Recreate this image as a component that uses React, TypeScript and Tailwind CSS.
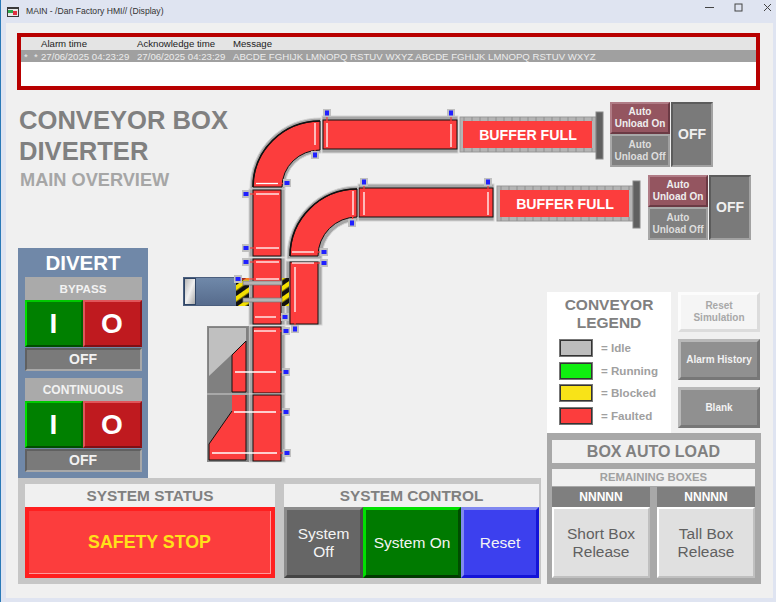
import React from 'react';

// sensors on the conveyors: s = blue tag position, l = white line, from the tag a short red lead
type Sensor = { sx: number; sy: number; x1: number; y1: number; x2: number; y2: number };

const sensors: Sensor[] = [
  { sx: 327, sy: 113, x1: 327, y1: 123, x2: 327, y2: 147 },
  { sx: 451, sy: 113, x1: 451, y1: 124, x2: 451, y2: 147 },
  { sx: 315, sy: 155, x1: 315, y1: 123, x2: 315, y2: 145 },
  { sx: 287, sy: 183, x1: 256, y1: 183.5, x2: 278, y2: 183.5 },
  { sx: 246, sy: 194, x1: 256, y1: 194, x2: 279, y2: 194 },
  { sx: 246, sy: 248, x1: 256, y1: 248, x2: 279, y2: 248 },
  { sx: 246, sy: 262, x1: 256, y1: 262, x2: 279, y2: 262 },
  { sx: 238, sy: 279, x1: 256, y1: 279, x2: 279, y2: 279 },
  { sx: 364, sy: 182, x1: 364, y1: 192, x2: 364, y2: 215 },
  { sx: 352, sy: 223, x1: 353, y1: 191, x2: 353, y2: 215 },
  { sx: 324, sy: 252, x1: 292, y1: 252, x2: 314, y2: 252 },
  { sx: 324, sy: 263, x1: 292, y1: 263, x2: 314, y2: 263 },
  { sx: 295, sy: 329, x1: 295, y1: 267, x2: 295, y2: 312 },
  { sx: 285, sy: 317, x1: 255, y1: 317, x2: 276, y2: 317 },
  { sx: 286, sy: 331, x1: 254, y1: 331, x2: 276, y2: 331 },
  { sx: 286, sy: 372, x1: 235, y1: 372, x2: 276, y2: 372 },
  { sx: 286, sy: 412, x1: 234, y1: 412, x2: 276, y2: 412 },
  { sx: 287, sy: 453, x1: 212, y1: 453, x2: 277, y2: 453 },
  { sx: 488, sy: 182, x1: 488, y1: 192, x2: 488, y2: 215 },
];

const RED = '#fc3d3d';
const RAIL = '#a6a6a6';
const RAIL_EDGE = '#d4d4d4';

const Straight = ({ x, y, w, h, vertical }: { x: number; y: number; w: number; h: number; vertical?: boolean }) => (
  <g>
    {vertical ? (
      <rect x={x - 4} y={y - 1} width={w + 8} height={h + 2} fill={RAIL} stroke={RAIL_EDGE} />
    ) : (
      <rect x={x - 1} y={y - 4} width={w + 2} height={h + 8} fill={RAIL} stroke={RAIL_EDGE} />
    )}
    <rect x={x} y={y} width={w} height={h} fill={RED} stroke="#111" />
  </g>
);

const Buffer = ({ x, y }: { x: number; y: number }) => (
  <g>
    <rect x={x} y={y} width={136} height={35} fill="#b4b4b4" stroke="#999" />
    {Array.from({ length: 17 }).map((_, i) => (
      <g key={i}>
        <line x1={x + 4 + i * 8} y1={y} x2={x + 4 + i * 8} y2={y + 4} stroke="#8e8e8e" />
        <line x1={x + 4 + i * 8} y1={y + 31} x2={x + 4 + i * 8} y2={y + 35} stroke="#8e8e8e" />
      </g>
    ))}
    <rect x={x + 3} y={y + 4} width={129} height={27} fill={RED} />
    <rect x={x + 136} y={y - 5} width={7} height={47} fill="#606060" stroke="#888" />
    <text
      x={x + 68}
      y={y + 22.5}
      textAnchor="middle"
      fill="#fff"
      fontSize="14.2"
      fontWeight="700"
      fontFamily="'Liberation Sans', Arial, sans-serif"
    >
      BUFFER FULL
    </text>
  </g>
);

const ConveyorDiagram = () => (
  <svg className="absolute left-[162px] top-[10px]" width={470} height={370} viewBox="180 100 470 370">
    <defs>
      <linearGradient id="cyl" x1="0" y1="0" x2="0" y2="1">
        <stop offset="0" stopColor="#7089aa" />
        <stop offset="1" stopColor="#566b8c" />
      </linearGradient>
      <linearGradient id="cap" x1="0" y1="0" x2="1" y2="1">
        <stop offset="0" stopColor="#b8b8b8" />
        <stop offset="0.5" stopColor="#f0f0f0" />
        <stop offset="1" stopColor="#aaa" />
      </linearGradient>
      <pattern id="hazard" width="9" height="9" patternUnits="userSpaceOnUse" patternTransform="rotate(-35)">
        <rect width="9" height="9" fill="#111" />
        <rect width="9" height="4.5" fill="#f4e000" />
      </pattern>
    </defs>

    {/* upper line */}
    <Straight x={323} y={120} w={134} h={29} />
    <path d="M321,118 A70,70 0 0 0 250,188 L250,190 L285,190 L285,188 A35,34 0 0 1 321,153 Z" fill={RAIL} stroke={RAIL_EDGE} />
    <path d="M320,121 A67,66 0 0 0 253,187 L282,187 A38,37 0 0 1 320,150 Z" fill={RED} stroke="#111" />
    <path d="M320,121 A67,66 0 0 0 253,187" fill="none" stroke="#111" strokeWidth="1.6" />
    <Buffer x={460} y={117} />

    {/* left vertical run */}
    <Straight x={253} y={190} w={28} h={66} vertical />
    <Straight x={253} y={259} w={28} h={65} vertical />
    <Straight x={253} y={327} w={28} h={66} vertical />
    <Straight x={253} y={395} w={28} h={66} vertical />

    {/* lower line */}
    <Straight x={359} y={188} w={134} h={29} />
    <path d="M358,186 A71,71 0 0 0 287,257 L287,259 L322,259 L322,257 A36,36 0 0 1 358,221 Z" fill={RAIL} stroke={RAIL_EDGE} />
    <path d="M357,189 A67,67 0 0 0 290,256 L318,256 A39,39 0 0 1 357,217 Z" fill={RED} stroke="#111" />
    <path d="M357,189 A67,67 0 0 0 290,256" fill="none" stroke="#111" strokeWidth="1.6" />
    <Buffer x={497} y={186} />
    <Straight x={290} y={262} w={28} h={62} vertical />

    {/* diverter ram */}
    <rect x={183.5} y={277.5} width={53} height={28} fill="url(#cyl)" stroke="#4b5f7e" />
    <rect x={184} y={278} width={12} height={27} fill="#2f4565" />
    <rect x={185} y={279} width={10} height={25} fill="url(#cap)" />
    <rect x={236} y={278} width={13} height={28} fill="url(#hazard)" />
    <rect x={282} y={278} width={7} height={28} fill="url(#hazard)" />
    <rect x={243} y={281} width={39} height={4} fill="#b4b4b4" stroke="#777" strokeWidth="0.7" />
    <rect x={243} y={298} width={39} height={4} fill="#b4b4b4" stroke="#777" strokeWidth="0.7" />

    {/* side chute */}
    <rect x={207.5} y={326.5} width={41} height={135} fill="#808080" stroke="#8a8a8a" />
    <polygon points="209,328 246,328 246,341 209,376" fill="#c0c0c0" />
    <polygon points="232,355 246,341 246,392 232,392" fill={RED} stroke="#111" />
    <line x1={207} y1={394} x2={249} y2={394} stroke="#a8a8a8" strokeWidth="2" />
    <polygon points="232,395 246,395 246,460 209,460 209,444 232,411" fill={RED} />
    <polyline points="209,444 209,460 246,460 246,395" fill="none" stroke="#111" />
    <line x1={209} y1={444} x2={232} y2={411} stroke="#111" />

    {/* sensors */}
    {sensors.map((s) => {
      const lx = Math.abs(s.sy - s.y1) < 2 ? (Math.abs(s.sx - s.x1) < Math.abs(s.sx - s.x2) ? s.x1 : s.x2) : s.x1;
      const ly = Math.abs(s.sy - s.y1) < 2 ? s.y1 : Math.abs(s.sy - s.y1) < Math.abs(s.sy - s.y2) ? s.y1 : s.y2;
      const horizontal = s.y1 === s.y2 || Math.abs(s.y1 - s.y2) < 1;
      return (
        <g key={`${s.sx}-${s.sy}`}>
          <line x1={s.x1} y1={s.y1} x2={s.x2} y2={s.y2} stroke="#fff" strokeWidth="1.3" />
          <line x1={s.sx} y1={s.sy} x2={lx} y2={ly} stroke={RED} strokeWidth="1.2" />
          <rect x={s.sx - 4} y={s.sy - 4} width={8} height={8} fill="#c0c0c0" />
          {horizontal ? (
            <rect x={s.sx - 2.5} y={s.sy - 2} width={5} height={4} fill="#2020ff" />
          ) : (
            <rect x={s.sx - 2} y={s.sy - 2.5} width={4} height={5} fill="#2020ff" />
          )}
        </g>
      );
    })}
  </svg>
);

const AutoUnload = ({ className }: { className: string }) => (
  <div className={`flex h-[65px] w-[103px] ${className}`}>
    <div className="flex w-[60px] flex-col text-center text-[10px] font-bold leading-[12px]">
      <button className="h-[32px] border-2 border-b-[#6b3a44] border-l-[#b07c86] border-r-[#6b3a44] border-t-[#b07c86] bg-[#945560] text-[#eee]">
        Auto
        <br />
        Unload On
      </button>
      <button className="h-[33px] border-2 border-b-[#a0a0a0] border-l-[#a8a8a8] border-r-[#a0a0a0] border-t-[#a8a8a8] bg-[#808080] text-[#ddd]">
        Auto
        <br />
        Unload Off
      </button>
    </div>
    <div className="ml-[1px] flex flex-1 items-center justify-center border-2 border-b-[#a2a2a2] border-l-[#5c5c5c] border-r-[#a2a2a2] border-t-[#5c5c5c] bg-[#7a7a7a] text-[14px] font-bold text-[#f0f0f0]">
      OFF
    </div>
  </div>
);

const OnOffGroup = ({ label, labelSize }: { label: string; labelSize: string }) => (
  <div className="w-[117px]">
    <div className={`flex h-[23px] items-center justify-center bg-[#aaaaaa] font-bold text-[#f2f2f2] ${labelSize}`}>{label}</div>
    <div className="flex h-[47px]">
      <button className="flex w-[58px] items-center justify-center border-2 border-b-[#004d00] border-l-[#00e000] border-r-[#006000] border-t-[#00c800] bg-[#008000] text-[28px] font-bold text-white">
        I
      </button>
      <button className="flex flex-1 items-center justify-center border-2 border-b-[#7f1015] border-l-[#e0555a] border-r-[#8f1418] border-t-[#e0555a] bg-[#bf1a1f] text-[28px] font-bold text-white">
        O
      </button>
    </div>
    <div className="mt-[1px] flex h-[23px] items-center justify-center border-2 border-b-[#a8a8a8] border-l-[#606060] border-r-[#a8a8a8] border-t-[#606060] bg-[#7a7a7a] text-[14px] font-bold text-[#f2f2f2]">
      OFF
    </div>
  </div>
);

const legendRows = [
  { color: 'bg-[#bdbdbd]', label: '= Idle' },
  { color: 'bg-[#10ee10]', label: '= Running' },
  { color: 'bg-[#f8e318]', label: '= Blocked' },
  { color: 'bg-[#fc3d3d]', label: '= Faulted' },
];

const App: React.FC = () => {
  return (
    <div className="relative h-[602px] w-[776px] overflow-hidden bg-[#dfe4f1] font-['Liberation_Sans',Arial,sans-serif]">
      <div className="absolute bottom-0 left-0 top-0 w-[1px] bg-[#2a7ab8]" />

      {/* title bar */}
      <div className="flex h-[23px] items-center pl-[7px] text-[8.6px] text-[#333]">
        <svg width="12" height="10" viewBox="0 0 12 10" className="mr-[7px]">
          <rect width="12" height="10" fill="#3a3a3a" />
          <rect x="1" y="2" width="10" height="7" fill="#e8e8e8" />
          <rect x="1" y="3" width="5" height="3" fill="#2ea84a" />
          <rect x="6" y="4" width="4" height="4" fill="#e03040" />
        </svg>
        <span>MAIN - /Dan Factory HMI// (Display)</span>
        <div className="ml-auto mr-[4px] flex -translate-y-[4px] items-center gap-[20px] text-[#444]">
          <svg width="9" height="9" viewBox="0 0 9 9">
            <line x1="0" y1="4.5" x2="9" y2="4.5" stroke="#444" />
          </svg>
          <svg width="9" height="9" viewBox="0 0 9 9">
            <rect x="1" y="1" width="7" height="7" fill="none" stroke="#444" />
          </svg>
          <svg width="9" height="9" viewBox="0 0 9 9">
            <path d="M1 1 L8 8 M8 1 L1 8" stroke="#444" />
          </svg>
        </div>
      </div>

      {/* display */}
      <div className="ml-[6px] h-[575px] w-[767px] bg-[#f0f0f0] pl-[11px] pt-[10px]">
        {/* alarm banner */}
        <div className="h-[57px] w-[743px] border-[4px] border-[#b80000] bg-white text-[9.65px] leading-[12px]">
          <div className="flex h-[13px] items-center bg-[#e4e4e4] pl-[20px] pt-[1px] text-[#222]">
            <span className="w-[96px]">Alarm time</span>
            <span className="w-[96px]">Acknowledge time</span>
            <span>Message</span>
          </div>
          <div className="flex h-[12px] items-center bg-[#a0a0a0] pl-[3px] pt-[1px] text-[#ececec]">
            <span className="w-[10px]">*</span>
            <span className="w-[7px]">*</span>
            <span className="w-[96px]">27/06/2025 04:23:29</span>
            <span className="w-[96px]">27/06/2025 04:23:29</span>
            <span>ABCDE FGHIJK LMNOPQ RSTUV WXYZ ABCDE FGHIJK LMNOPQ RSTUV WXYZ</span>
          </div>
        </div>

        <div className="flex">
          <div className="ml-[1px] w-[523px]">
            {/* title, divert and conveyors */}
            <div className="relative flex h-[388px] flex-col">
              <ConveyorDiagram />
              <div className="ml-[1px] mt-[15px] whitespace-nowrap text-[25.6px] font-bold leading-[31px] text-[#808080]">
                CONVEYOR BOX
                <br />
                DIVERTER
              </div>
              <div className="ml-[2px] mt-[2px] whitespace-nowrap text-[18.2px] font-bold leading-[22px] text-[#a6a6a6]">MAIN OVERVIEW</div>

              <div className="mt-auto flex h-[230px] w-[130px] flex-col items-center bg-[#7088a8]">
                <div className="flex h-[29px] items-center pt-[2px] text-[20.5px] font-bold text-white">DIVERT</div>
                <OnOffGroup label="BYPASS" labelSize="text-[11.6px]" />
                <div className="h-[7px]" />
                <OnOffGroup label="CONTINUOUS" labelSize="text-[12px]" />
              </div>
            </div>

            {/* status and control */}
            <div className="flex h-[106px] gap-[9px] bg-[#c6c6c6] pl-[7px] pt-[6px]">
              <div className="w-[250px]">
                <div className="flex h-[23px] items-center justify-center bg-[#f0f0f0] pt-[1px] text-[15.4px] font-bold text-[#808080]">SYSTEM STATUS</div>
                <div className="h-[71px] border-[4px] border-[#ff1f1f] bg-[#fc3d3d]">
                  <div className="flex h-full items-center justify-center border-b border-r border-[#ff9a9a] text-[17.8px] font-bold text-[#ffe11a]">
                    SAFETY STOP
                  </div>
                </div>
              </div>
              <div className="w-[255px]">
                <div className="flex h-[23px] items-center justify-center bg-[#f0f0f0] pt-[1px] text-[15.4px] font-bold text-[#808080]">SYSTEM CONTROL</div>
                <div className="flex h-[71px] text-[15.5px] leading-[18px] text-[#f4f4f4]">
                  <button className="w-[79px] border-[3px] border-b-[#444] border-l-[#8c8c8c] border-r-[#484848] border-t-[#8c8c8c] bg-[#666666]">
                    System
                    <br />
                    Off
                  </button>
                  <button className="w-[98px] border-[3px] border-b-[#003a00] border-l-[#00e000] border-r-[#004d00] border-t-[#00e000] bg-[#007a00]">
                    System On
                  </button>
                  <button className="flex-1 border-[3px] border-b-[#1414d8] border-l-[#8088f0] border-r-[#1414d8] border-t-[#8088f0] bg-[#3c40ee]">
                    Reset
                  </button>
                </div>
              </div>
            </div>
          </div>

          {/* right column */}
          <div className="ml-[6px] w-[214px]">
            <AutoUnload className="ml-[63px] mt-[12px]" />
            <AutoUnload className="ml-[101px] mt-[8px]" />

            <div className="mt-[52px] flex h-[141px]">
              <div className="w-[124px] bg-white pt-[4px]">
                <div className="text-center text-[15.5px] font-bold leading-[18px] text-[#808080]">
                  CONVEYOR
                  <br />
                  LEGEND
                </div>
                <div className="mt-[7px] flex flex-col gap-[4.5px] pl-[12px]">
                  {legendRows.map((r) => (
                    <div key={r.label} className="flex h-[18px] items-center">
                      <div className={`h-[18px] w-[34px] border-2 border-[#333] outline outline-1 -outline-offset-1 outline-[#777] ${r.color}`} />
                      <span className="ml-[8px] text-[11.6px] font-bold text-[#a0a0a0]">{r.label}</span>
                    </div>
                  ))}
                </div>
              </div>
              <div className="ml-[7px] flex w-[82px] flex-col gap-[7px] text-[10px] font-bold leading-[12px]">
                <button className="h-[40px] border-[3px] border-b-[#dcdcdc] border-l-[#fcfcfc] border-r-[#dcdcdc] border-t-[#fcfcfc] bg-[#f5f5f5] text-[#a8a8a8]">
                  Reset
                  <br />
                  Simulation
                </button>
                <button className="h-[41px] border-[3px] border-b-[#777] border-l-[#b8b8b8] border-r-[#777] border-t-[#b8b8b8] bg-[#909090] text-[#f2f2f2]">
                  Alarm History
                </button>
                <button className="h-[41px] border-[3px] border-b-[#777] border-l-[#b8b8b8] border-r-[#777] border-t-[#b8b8b8] bg-[#909090] text-[#f2f2f2]">
                  Blank
                </button>
              </div>
            </div>

            {/* box auto load */}
            <div className="h-[151px] bg-[#a8a8a8] pl-[5px] pr-[6px] pt-[7px]">
              <div className="flex h-[23px] items-center justify-center bg-[#f0f0f0] text-[16px] font-bold text-[#808080]">BOX AUTO LOAD</div>
              <div className="mt-[6px] flex h-[17px] items-center justify-center bg-[#f0f0f0] text-[11.3px] font-bold text-[#a0a0a0]">REMAINING BOXES</div>
              <div className="mt-[1px] grid grid-cols-2 gap-x-[7px]">
                <div>
                  <div className="flex h-[20px] items-center justify-center bg-[#7f7f7f] text-[12px] font-bold text-white">NNNNN</div>
                  <button className="h-[71px] w-full border-[2px] border-b-[#c0c0c0] border-l-white border-r-[#c0c0c0] border-t-white bg-[#e0e0e0] text-[15.5px] leading-[18px] text-[#606060]">
                    Short Box
                    <br />
                    Release
                  </button>
                </div>
                <div>
                  <div className="flex h-[20px] items-center justify-center bg-[#7f7f7f] text-[12px] font-bold text-white">NNNNN</div>
                  <button className="h-[71px] w-full border-[2px] border-b-[#c0c0c0] border-l-white border-r-[#c0c0c0] border-t-white bg-[#e0e0e0] text-[15.5px] leading-[18px] text-[#606060]">
                    Tall Box
                    <br />
                    Release
                  </button>
                </div>
              </div>
            </div>
          </div>
        </div>
      </div>
    </div>
  );
};

export default App;
